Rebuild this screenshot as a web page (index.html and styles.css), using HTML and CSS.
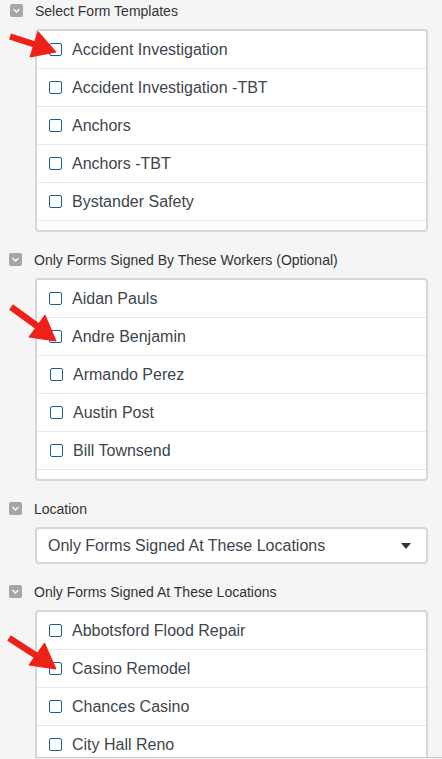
FILE: index.html
```html
<!DOCTYPE html>
<html>
<head>
<meta charset="utf-8">
<link rel="stylesheet" href="styles.css">
</head>
<body>
<div class="page">
  <div class="hdr"><span class="chev"><svg viewBox="0 0 13 13" width="13" height="13"><path d="M4 5.5 L6.5 8 L9 5.5" fill="none" stroke="#fff" stroke-width="1.4" stroke-linecap="round" stroke-linejoin="round"/></svg></span><span>Select Form Templates</span></div>
  <div class="box">
    <div class="row"><span class="cb"></span><span>Accident Investigation</span></div>
    <div class="row"><span class="cb"></span><span>Accident Investigation -TBT</span></div>
    <div class="row"><span class="cb"></span><span>Anchors</span></div>
    <div class="row"><span class="cb"></span><span>Anchors -TBT</span></div>
    <div class="row"><span class="cb"></span><span>Bystander Safety</span></div>
    <div class="row"></div>
  </div>

  <div class="hdr gap"><span class="chev"><svg viewBox="0 0 13 13" width="13" height="13"><path d="M4 5.5 L6.5 8 L9 5.5" fill="none" stroke="#fff" stroke-width="1.4" stroke-linecap="round" stroke-linejoin="round"/></svg></span><span>Only Forms Signed By These Workers (Optional)</span></div>
  <div class="box">
    <div class="row"><span class="cb"></span><span>Aidan Pauls</span></div>
    <div class="row"><span class="cb"></span><span>Andre Benjamin</span></div>
    <div class="row shift"><span class="cb"></span><span>Armando Perez</span></div>
    <div class="row shift"><span class="cb"></span><span>Austin Post</span></div>
    <div class="row shift"><span class="cb"></span><span>Bill Townsend</span></div>
    <div class="row"></div>
  </div>

  <div class="hdr gap"><span class="chev"><svg viewBox="0 0 13 13" width="13" height="13"><path d="M4 5.5 L6.5 8 L9 5.5" fill="none" stroke="#fff" stroke-width="1.4" stroke-linecap="round" stroke-linejoin="round"/></svg></span><span>Location</span></div>
  <div class="select"><span>Only Forms Signed At These Locations</span><svg class="caret" viewBox="0 0 10 6" width="10" height="6"><path d="M0 0 H10 L5 6 Z" fill="#333"/></svg></div>

  <div class="hdr gap"><span class="chev"><svg viewBox="0 0 13 13" width="13" height="13"><path d="M4 5.5 L6.5 8 L9 5.5" fill="none" stroke="#fff" stroke-width="1.4" stroke-linecap="round" stroke-linejoin="round"/></svg></span><span>Only Forms Signed At These Locations</span></div>
  <div class="clip">
    <div class="box last">
      <div class="row"><span class="cb"></span><span>Abbotsford Flood Repair</span></div>
      <div class="row"><span class="cb"></span><span>Casino Remodel</span></div>
      <div class="row"><span class="cb"></span><span>Chances Casino</span></div>
      <div class="row"><span class="cb"></span><span>City Hall Reno</span></div>
    </div>
  </div>
</div>

<svg class="arrows" width="442" height="759" viewBox="0 0 442 759">
  <g fill="#ee2118" stroke="#ee2118" stroke-linejoin="round">
    <line x1="10" y1="36.5" x2="38" y2="45.5" stroke-width="6.5"/>
    <polygon points="56,52 38,31.5 30,57" stroke-width="1"/>
    <line x1="11" y1="307" x2="40" y2="328" stroke-width="6.5"/>
    <polygon points="56,341 45,315 29,337" stroke-width="1"/>
    <line x1="9" y1="638" x2="40" y2="658" stroke-width="6.5"/>
    <polygon points="56,669 44.5,643 29,665" stroke-width="1"/>
  </g>
</svg>
</body>
</html>
```

FILE: styles.css
```css
html, body {
  margin: 0;
  padding: 0;
  background: #f5f5f5;
  height: 759px;
  overflow: hidden;
}
body {
  font-family: "Liberation Sans", Arial, sans-serif;
  position: relative;
}
.page {
  display: flex;
  flex-direction: column;
}
.hdr {
  height: 21px;
  display: flex;
  align-items: center;
  gap: 12px;
  padding-left: 9px;
  font-size: 14px;
  color: #333;
  margin-bottom: 8px;
}
.hdr:first-child {
  padding-left: 10px;
}
.hdr.gap {
  margin-top: 17px;
}
.chev {
  width: 13px;
  height: 13px;
  background: #a6a6a6;
  border-radius: 2px;
  display: flex;
}
.box {
  margin-left: 35px;
  width: 389px;
  height: 199px;
  border: 2px solid #d6d6d6;
  border-radius: 4px;
  background: #fff;
  overflow: hidden;
}
.row {
  height: 38px;
  box-sizing: border-box;
  border-bottom: 1px solid #e8e8e8;
  display: flex;
  align-items: center;
  padding-left: 12px;
  gap: 10px;
  font-size: 16px;
  color: #40454b;
}
.row.shift {
  padding-left: 13px;
}
.cb {
  width: 13px;
  height: 13px;
  box-sizing: border-box;
  border: 1.5px solid #1d5d96;
  border-radius: 2px;
  background: #fff;
  flex: none;
}
.select {
  margin-left: 35px;
  width: 363px;
  height: 33px;
  border: 2px solid #d6d6d6;
  border-radius: 4px;
  background: #fff;
  display: flex;
  align-items: center;
  justify-content: space-between;
  padding: 0 15px 0 11px;
  font-size: 16px;
  color: #40454b;
}
.caret {
  display: block;
}
.clip {
  margin-left: 35px;
  height: 147px;
  border-bottom: 1px solid #c8c8c8;
  overflow: hidden;
}
.clip .box.last {
  margin-left: 0;
  height: 200px;
}
.arrows {
  position: absolute;
  left: 0;
  top: 0;
  pointer-events: none;
}
```
